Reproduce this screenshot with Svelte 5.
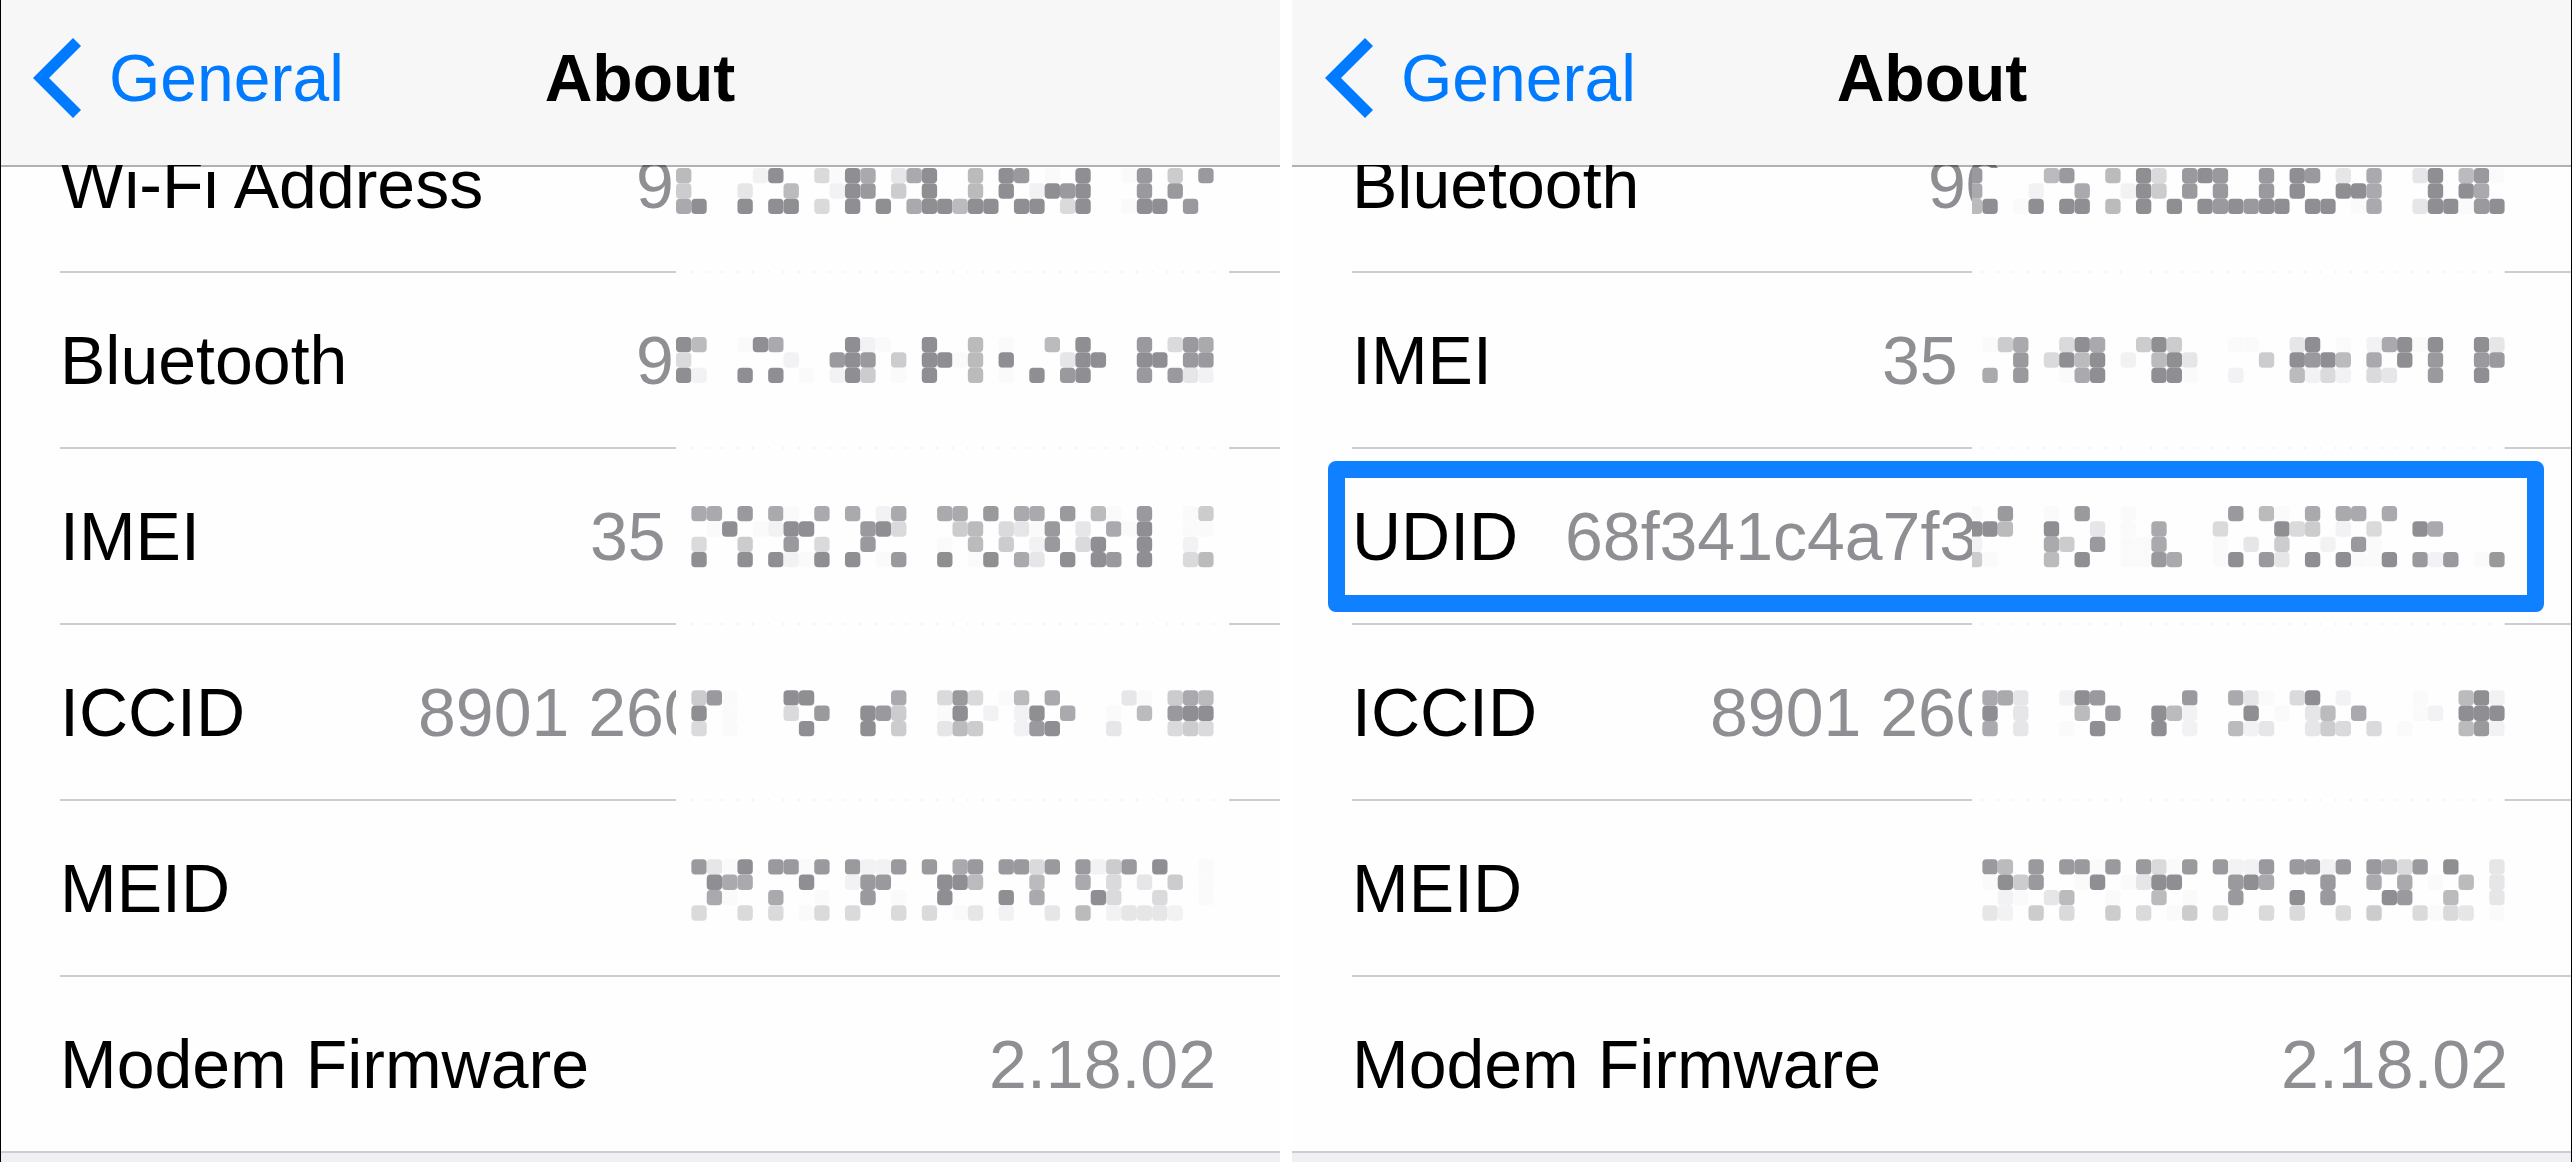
<script lang="ts">
  type Row = { label: string; value: string; width?: number; highlight?: boolean };
  type Block = { line: number; cells: string[] };
  type Screen = { id: string; rows: Row[]; mosaic: { x: number; width: number; blocks: Block[] } };

  const CELL = 15.36;
  const SEPARATORS = [104, 280, 456, 632];

  // full length of each value, the visible digits sit at its start
  const MAC = 580;
  const IMEI = 626;
  const ICCID = 798;
  const UDID = 943;

  // 1 = lightest, 9 = darkest
  const shades = [
    '#fefefe', '#fafafa', '#f2f2f4', '#e6e6e8', '#dadadc',
    '#cccccf', '#bbbbbe', '#aaaaae', '#99999e', '#8f8f93',
  ];

  const screens: Screen[] = [
    {
      id: 'before',
      rows: [
        { label: 'Wi-Fi Address', value: '9', width: MAC },
        { label: 'Bluetooth', value: '9', width: MAC },
        { label: 'IMEI', value: '35', width: IMEI },
        { label: 'ICCID', value: '8901 260', width: ICCID },
        { label: 'MEID', value: '' },
        { label: 'Modem Firmware', value: '2.18.02' },
      ],
      mosaic: {
        x: 0,
        width: 553,
        blocks: [
          { line: 0, cells: [
            '6....29..4197.379..6.98.1.9..18.5.8',
            '5...3..6..298.5.9..6.9.2989...8.8..',
            '79..9.99.4.9.9.799699.99.49..199.8.',
          ] },
          { line: 11, cells: [
            '96..197....921..9..6.1..6.9...8.487',
            '4......2..898.5.9916.9...399..99.88',
            '92..9.9.1.295.1.9..6.1.9.89...8.832',
          ] },
          { line: 22, cells: [
            '.77.8.71.7.7.27..77.8.77.8.61.8..15',
            '..19.1299...894...56.4318.3.719..11',
            '.4..5..8.4..8....1.6.5.28.49..9..2.',
            '.9..9.9219.9.18..9.19.73.9.98.9..46',
          ] },
          { line: 34, cells: [
            '.581...99.....7..484.16.7....31.576',
            '.9.1...4.8..985..19.2.29.7..1.6.899',
            '.4.1....9...9.5..365..289...3...454',
          ] },
          { line: 45, cells: [
            '.8319.8818.8228.8.78.8848.8258.9..1',
            '..977...9..288...996...6..7.4.3.5.1',
            '..71..7..1..8.1..9...9.7...94..4..1',
            '.4..4.4.14.4..4.4.13.2..3.6.23332..',
          ] },
        ],
      },
    },
    {
      id: 'after',
      rows: [
        { label: 'Bluetooth', value: '90', width: MAC },
        { label: 'IMEI', value: '35', width: IMEI },
        { label: 'UDID', value: '68f341c4a7f3', width: UDID, highlight: true },
        { label: 'ICCID', value: '8901 260', width: ICCID },
        { label: 'MEID', value: '' },
        { label: 'Modem Firmware', value: '2.18.02' },
      ],
      mosaic: {
        x: 5,
        width: 533,
        blocks: [
          { line: 0, cells: [
            '8....68..6.94.898..8.98.3.7..39.681',
            '7...2..7..295.8.8..8.9..997...9.97.',
            '69.19.99.6.9.9.989899.99.17..399189',
          ] },
          { line: 11, cells: [
            '.157..497..595...11..39.1.27919..93',
            '...8.4969.2.693....5.9896.7.9.8..88',
            '.7.8..179...991..2...6242.43..8..9.',
          ] },
          { line: 22, cells: [
            '1.8..1.8..1......8.61.7.77.7.......',
            '996..9..3.1.7...4...945.2.4..97....',
            '2....75.8.117...1.3.5..2.81........',
            '51...6.9..1187..19.83.9.9119.828.18',
          ] },
          { line: 34, cells: [
            '.773..298.....8..731.49.2....1..692',
            '.9.3...6.8..962...9.1.36.7...12.999',
            '.7.3..1.9...9.2..623..354.4.1...682',
          ] },
          { line: 45, cells: [
            '.86.8.8818.8418.8228.8828.8748.9..3',
            '.1958..19.1399...897...8..7.7.1.6.3',
            '..21.36..1..6.1..8...9.8...98..6..3',
            '.32.5.4..5.4.15.4..4.4..4.5..4143.1',
          ] },
        ],
      },
    },
  ];

  function toCells(blocks: Block[]) {
    return blocks.flatMap((block) =>
      block.cells.flatMap((row, r) =>
        [...row].flatMap((c, col) =>
          c === '.'
            ? []
            : [{ x: col * CELL, y: (block.line + r) * CELL, fill: shades[Number(c)] }]
        )
      )
    );
  }
</script>

<main class="screens">
  {#each screens as screen (screen.id)}
    <section class="screen">
      <header class="navbar">
        <button class="back">
          <svg class="chevron" viewBox="0 0 48 80" aria-hidden="true">
            <path d="M40 0 L48 8 L16 40 L48 72 L40 80 L0 40 Z" />
          </svg>
          General
        </button>
        <h1>About</h1>
      </header>

      <dl class="list">
        {#each screen.rows as row}
          <div class="row">
            <dt>{row.label}</dt>
            <dd style:width={row.width ? `${row.width}px` : null}>{row.value}</dd>
            {#if row.highlight}
              <span class="highlight"></span>
            {/if}
          </div>
        {/each}
      </dl>

      <svg
        class="mosaic {screen.id}"
        width={screen.mosaic.width}
        height="799"
        viewBox="{screen.mosaic.x} 0 {screen.mosaic.width} 799"
        aria-hidden="true"
      >
        <rect x="0" y="0" width="560" height="799" fill="#fefefe" />
        {#each SEPARATORS as y}
          {#each { length: 35 } as _, i}
            <circle cx={(i + 1) * CELL} cy={y} r="1" fill="#f0f0f0" />
          {/each}
        {/each}
        {#each toCells(screen.mosaic.blocks) as cell}
          <rect x={cell.x} y={cell.y} width={CELL} height={CELL} rx="4" fill={cell.fill} />
        {/each}
      </svg>
    </section>
  {/each}
</main>

<style>
  :global(body) {
    background: #fff;
  }

  .screens {
    position: relative;
    display: flex;
    gap: 12px;
    min-height: 100vh;
    font-family: "Liberation Sans", Arial, sans-serif;
    font-size: 68px;
    line-height: 80px;
    color: #000;
  }

  .screens::after {
    content: '';
    position: absolute;
    inset: 0;
    z-index: 4;
    border: solid #000;
    border-width: 0 1px;
    pointer-events: none;
  }

  .screen {
    position: relative;
    flex: 1;
    min-width: 0;
    overflow: hidden;
    background: #efeff4;
  }

  .navbar {
    position: relative;
    z-index: 2;
    display: grid;
    grid-template-columns: 1fr auto 1fr;
    align-items: center;
    box-sizing: border-box;
    height: 167px;
    padding: 0 33px 9px;
    background: #f7f7f7;
    background-clip: padding-box;
    border-bottom: 2px solid rgba(0, 0, 0, 0.3);
    font-size: 66px;
  }

  .back {
    display: flex;
    align-items: center;
    gap: 28px;
    padding: 0;
    border: 0;
    background: none;
    font: inherit;
    color: #007aff;
    cursor: pointer;
  }

  .chevron {
    width: 48px;
    height: 80px;
    fill: currentColor;
  }

  h1 {
    margin: 0;
    font-size: inherit;
    font-weight: 700;
  }

  /* first row is scrolled partly under the bar */
  .list {
    margin: -70px 0 0;
    padding-left: 60px;
    background: #fefefe;
    border-bottom: 2px solid #cdcdcf;
  }

  .row {
    position: relative;
    display: flex;
    align-items: center;
    justify-content: space-between;
    height: 174px;
    padding-right: 64px;
    border-bottom: 2px solid #cdcdcd;
    white-space: nowrap;
  }

  .row:last-child {
    border-bottom: 0;
  }

  dd {
    margin: 0;
    color: #8e8e93;
  }

  .highlight {
    position: absolute;
    inset: 12px 28px 11px -24px;
    z-index: 3;
    border: 17px solid #0f80ff;
    border-radius: 8px;
  }

  .mosaic {
    position: absolute;
    top: 168px;
    z-index: 1;
  }

  .mosaic.before {
    right: 51px;
  }

  .mosaic.after {
    right: 67px;
  }
</style>
